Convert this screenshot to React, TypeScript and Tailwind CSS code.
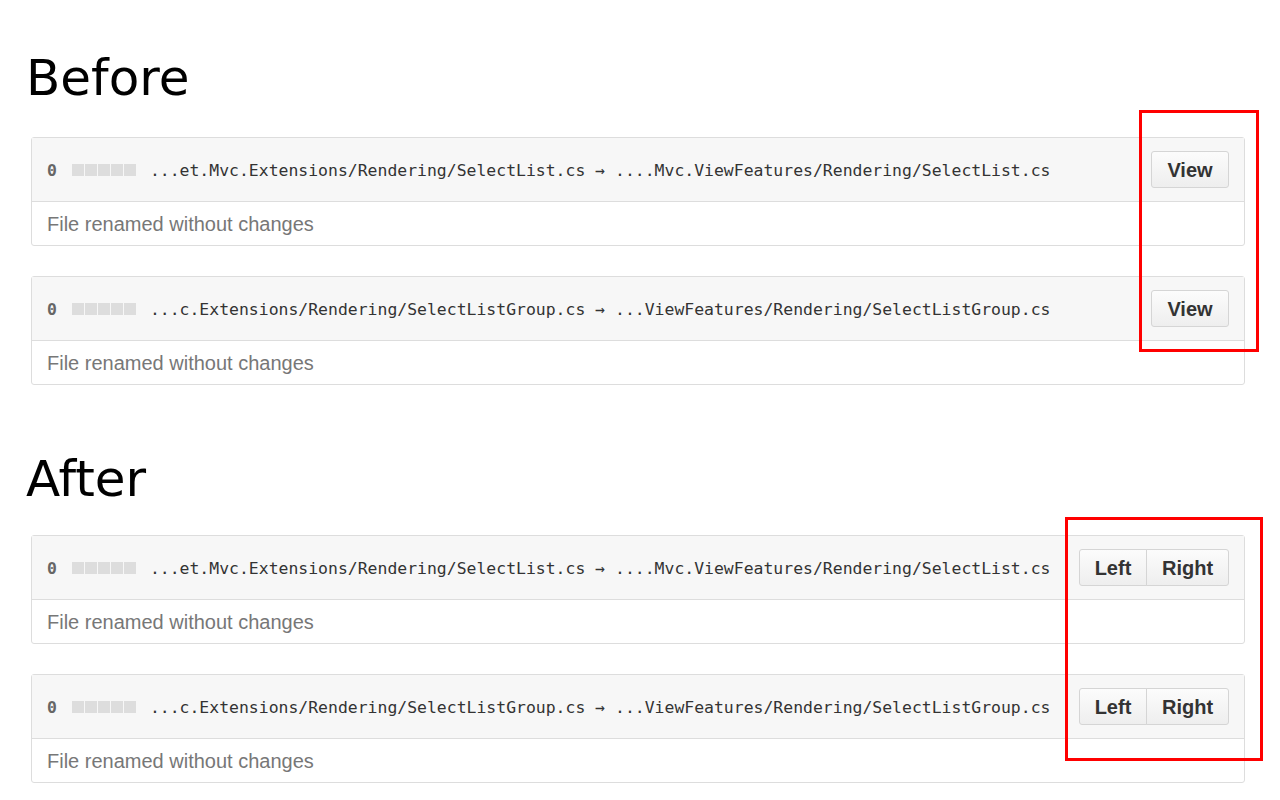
import React from "react";

type FileRow = {
  from: string;
  to: string;
};

const files: FileRow[] = [
  {
    from: "...et.Mvc.Extensions/Rendering/SelectList.cs",
    to: "....Mvc.ViewFeatures/Rendering/SelectList.cs",
  },
  {
    from: "...c.Extensions/Rendering/SelectListGroup.cs",
    to: "...ViewFeatures/Rendering/SelectListGroup.cs",
  },
];

const btn =
  "h-[37px] border border-[#d5d5d5] bg-gradient-to-b from-[#fcfcfc] to-[#eeeeee] text-[20px] font-bold text-[#333] font-['Liberation_Sans',Arial,sans-serif]";

// diffstat squares, all grey for a rename
const DiffStat = () => (
  <span className="flex gap-px">
    {[0, 1, 2, 3, 4].map((i) => (
      <span key={i} className="block h-[12px] w-[12px] bg-[#dddddd]" />
    ))}
  </span>
);

const FileCard = ({ file, split }: { file: FileRow; split: boolean }) => (
  <div className="w-[1214px] rounded-[3px] border border-[#dddddd] bg-white">
    <div className="flex h-[64px] items-center border-b border-[#dddddd] bg-[#f7f7f7] pl-[15px] pr-[15px]">
      <span className="pt-[3px] font-['DejaVu_Sans_Mono',monospace] text-[16.4px] font-bold text-[#666]">0</span>
      <span className="ml-[15px]">
        <DiffStat />
      </span>
      <span className="ml-[14px] whitespace-pre pt-[4px] font-['DejaVu_Sans_Mono',monospace] text-[16.45px] text-[#333]">
        {file.from} → {file.to}
      </span>
      <div className="ml-auto flex">
        {split ? (
          <>
            <button className={`${btn} w-[68px] rounded-l-[3px]`}>Left</button>
            <button className={`${btn} -ml-px w-[83px] rounded-r-[3px]`}>Right</button>
          </>
        ) : (
          <button className={`${btn} w-[78px] rounded-[3px]`}>View</button>
        )}
      </div>
    </div>
    <div className="flex h-[43px] items-center pl-[15px] font-['Liberation_Sans',Arial,sans-serif] text-[20px] text-[#777]">
      File renamed without changes
    </div>
  </div>
);

const Heading = ({ children, className }: { children: React.ReactNode; className?: string }) => (
  <h1
    className={`ml-[26px] text-[50px] leading-none text-black font-['DejaVu_Sans',sans-serif] ${className ?? ""}`}
  >
    {children}
  </h1>
);

export default function App() {
  return (
    <div className="relative min-h-[800px] w-[1280px] overflow-hidden bg-white pt-[53px]">
      <Heading>Before</Heading>
      <div className="ml-[31px] mt-[34px] flex flex-col gap-[30px]">
        {files.map((f) => (
          <FileCard key={f.from} file={f} split={false} />
        ))}
      </div>

      <Heading className="mt-[69px]">After</Heading>
      <div className="ml-[31px] mt-[31px] flex flex-col gap-[30px]">
        {files.map((f) => (
          <FileCard key={f.from} file={f} split />
        ))}
      </div>

      {/* annotation boxes drawn over the screenshot */}
      <div className="absolute left-[1139px] top-[110px] h-[242px] w-[120px] border-[3px] border-[#ff0000]" />
      <div className="absolute left-[1065px] top-[517px] h-[244px] w-[198px] border-[3px] border-[#ff0000]" />
    </div>
  );
}
